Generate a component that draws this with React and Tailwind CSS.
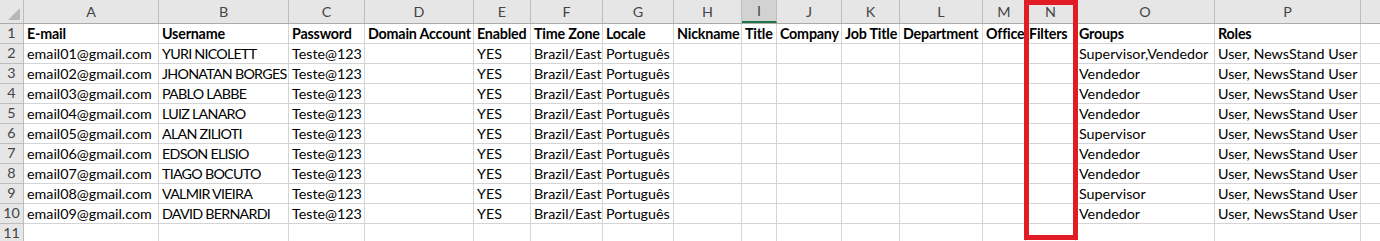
import React from 'react';

const cols = [
  { key: 'A', w: 135 },
  { key: 'B', w: 130 },
  { key: 'C', w: 76 },
  { key: 'D', w: 109 },
  { key: 'E', w: 57 },
  { key: 'F', w: 72 },
  { key: 'G', w: 71 },
  { key: 'H', w: 68 },
  { key: 'I', w: 35 },
  { key: 'J', w: 65 },
  { key: 'K', w: 58 },
  { key: 'L', w: 83 },
  { key: 'M', w: 43 },
  { key: 'N', w: 50 },
  { key: 'O', w: 139 },
  { key: 'P', w: 146 },
];

const headers = ['E-mail', 'Username', 'Password', 'Domain Account', 'Enabled', 'Time Zone', 'Locale', 'Nickname', 'Title', 'Company', 'Job Title', 'Department', 'Office', 'Filters', 'Groups', 'Roles'];

const people = [
  ['YURI NICOLETT', 'Supervisor,Vendedor'],
  ['JHONATAN BORGES', 'Vendedor'],
  ['PABLO LABBE', 'Vendedor'],
  ['LUIZ LANARO', 'Vendedor'],
  ['ALAN ZILIOTI', 'Supervisor'],
  ['EDSON ELISIO', 'Vendedor'],
  ['TIAGO BOCUTO', 'Vendedor'],
  ['VALMIR VIEIRA', 'Supervisor'],
  ['DAVID BERNARDI', 'Vendedor'],
];

const rows = [
  headers,
  ...people.map(([name, group], i) => [
    `email0${i + 1}@gmail.com`, name, 'Teste@123', '', 'YES', 'Brazil/East', 'Português',
    '', '', '', '', '', '', '', group, 'User, NewsStand User',
  ]),
  headers.map(() => ''),
];

function Cell({ w, children, bold, tight }) {
  return (
    <div
      className={`h-[20px] shrink-0 border-r border-b border-[#d4d4d4] pl-[3px] flex items-end overflow-hidden whitespace-nowrap leading-[19px] ${bold ? 'font-bold tracking-[-0.2px]' : ''} ${tight ? 'tracking-[-0.75px]' : ''}`}
      style={{ width: w }}
    >
      {children}
    </div>
  );
}

export default function App() {
  return (
    <div className="relative w-[1380px] h-[241px] overflow-hidden bg-white text-[14.3px] text-black" style={{ fontFamily: 'Lato, "Open Sans", sans-serif' }}>
      {/* column letters */}
      <div className="flex h-[24px] bg-[#e6e6e6] border-b border-[#ababab] text-[#444]">
        <div className="relative w-[24px] shrink-0 border-r border-[#bdbdbd]">
          <svg className="absolute right-[3px] bottom-[3px]" width="12" height="12" viewBox="0 0 12 12">
            <polygon points="12,0 12,12 0,12" fill="#b7b7b7" />
          </svg>
        </div>
        {cols.map((c) => (
          <div
            key={c.key}
            className={`shrink-0 flex items-center justify-center border-r border-[#bdbdbd] ${c.key === 'I' ? 'bg-[#d2d2d2] border-b-2 border-b-[#217346]' : ''}`}
            style={{ width: c.w }}
          >
            {c.key}
          </div>
        ))}
        <div className="flex-1" />
      </div>

      {rows.map((r, ri) => (
        <div key={ri} className="flex">
          <div className="w-[24px] h-[20px] shrink-0 bg-[#e6e6e6] border-r border-b border-[#bdbdbd] text-[#444] flex items-center justify-center leading-none">
            {ri + 1}
          </div>
          {cols.map((c, ci) => (
            <Cell key={c.key} w={c.w} bold={ri === 0} tight={ri > 0 && c.key === 'B'}>
              {r[ci]}
            </Cell>
          ))}
          <div className="flex-1 h-[20px] border-b border-[#d4d4d4]" />
        </div>
      ))}

      {/* highlight around column N */}
      <div className="absolute left-[1024px] top-0 w-[54px] h-[240px] border-[5px] border-[#e21c24]" />
    </div>
  );
}
